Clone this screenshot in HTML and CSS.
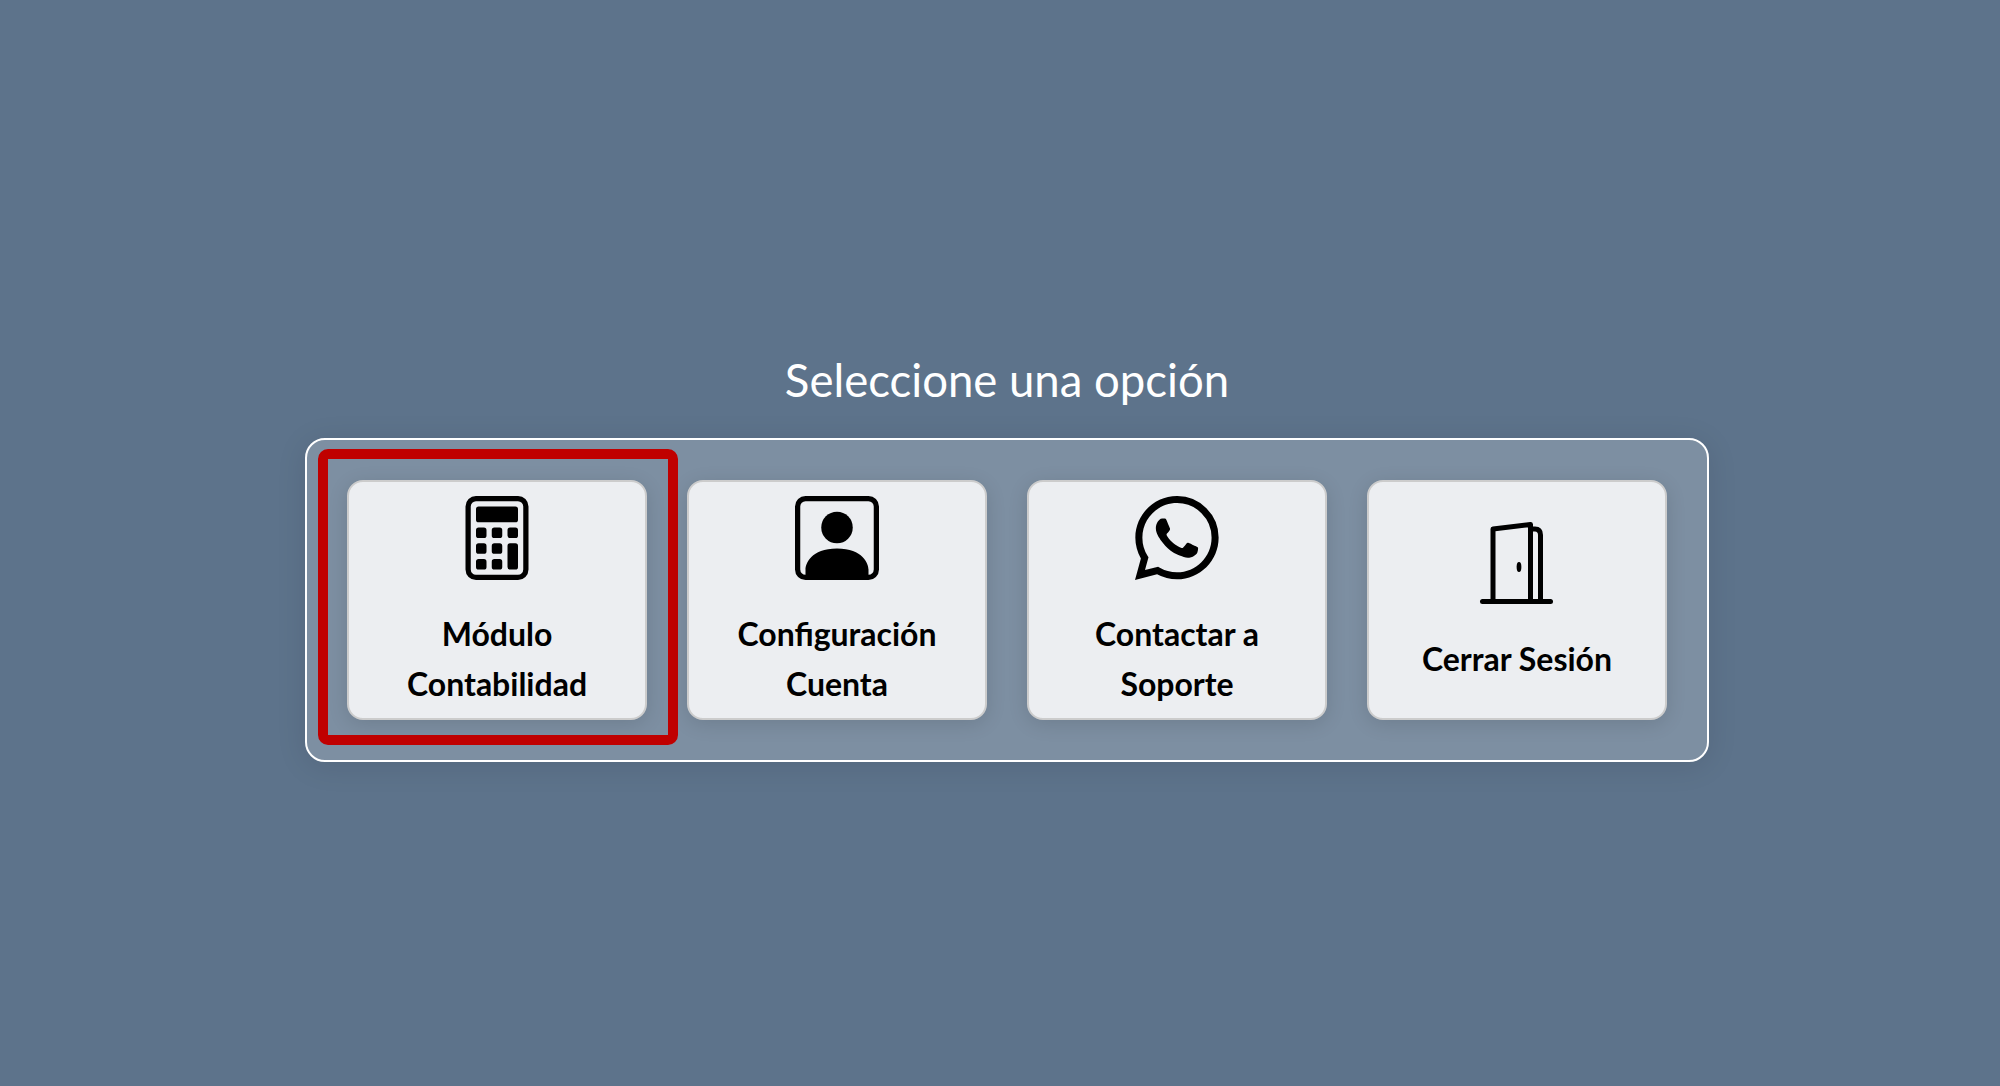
FILE: index.html
```html
<!DOCTYPE html>
<html lang="es">
<head>
<meta charset="utf-8">
<title>Seleccione una opción</title>
<link rel="stylesheet" href="styles.css">
</head>
<body>
<main class="page">
  <h1 class="title">Seleccione una opción</h1>
  <section class="panel">
    <a class="card">
      <svg class="icon" viewBox="0 0 16 16" fill="currentColor"><path d="M12 1a1 1 0 0 1 1 1v12a1 1 0 0 1-1 1H4a1 1 0 0 1-1-1V2a1 1 0 0 1 1-1h8zM4 0a2 2 0 0 0-2 2v12a2 2 0 0 0 2 2h8a2 2 0 0 0 2-2V2a2 2 0 0 0-2-2H4z"/><path d="M4 2.5a.5.5 0 0 1 .5-.5h7a.5.5 0 0 1 .5.5v2a.5.5 0 0 1-.5.5h-7a.5.5 0 0 1-.5-.5v-2zm0 4a.5.5 0 0 1 .5-.5h1a.5.5 0 0 1 .5.5v1a.5.5 0 0 1-.5.5h-1a.5.5 0 0 1-.5-.5v-1zm0 3a.5.5 0 0 1 .5-.5h1a.5.5 0 0 1 .5.5v1a.5.5 0 0 1-.5.5h-1a.5.5 0 0 1-.5-.5v-1zm0 3a.5.5 0 0 1 .5-.5h1a.5.5 0 0 1 .5.5v1a.5.5 0 0 1-.5.5h-1a.5.5 0 0 1-.5-.5v-1zm3-6a.5.5 0 0 1 .5-.5h1a.5.5 0 0 1 .5.5v1a.5.5 0 0 1-.5.5h-1a.5.5 0 0 1-.5-.5v-1zm0 3a.5.5 0 0 1 .5-.5h1a.5.5 0 0 1 .5.5v1a.5.5 0 0 1-.5.5h-1a.5.5 0 0 1-.5-.5v-1zm0 3a.5.5 0 0 1 .5-.5h1a.5.5 0 0 1 .5.5v1a.5.5 0 0 1-.5.5h-1a.5.5 0 0 1-.5-.5v-1zm3-6a.5.5 0 0 1 .5-.5h1a.5.5 0 0 1 .5.5v1a.5.5 0 0 1-.5.5h-1a.5.5 0 0 1-.5-.5v-1zm0 3a.5.5 0 0 1 .5-.5h1a.5.5 0 0 1 .5.5v4a.5.5 0 0 1-.5.5h-1a.5.5 0 0 1-.5-.5v-4z"/></svg>
      <span class="label">Módulo Contabilidad</span>
      <span class="highlight"></span>
    </a>
    <a class="card">
      <svg class="icon" viewBox="0 0 16 16" fill="currentColor"><path d="M11 6a3 3 0 1 1-6 0 3 3 0 0 1 6 0z"/><path d="M2 0a2 2 0 0 0-2 2v12a2 2 0 0 0 2 2h12a2 2 0 0 0 2-2V2a2 2 0 0 0-2-2H2zm12 1a1 1 0 0 1 1 1v12a1 1 0 0 1-1 1v-1c0-1-1-4-6-4s-6 3-6 4v1a1 1 0 0 1-1-1V2a1 1 0 0 1 1-1h12z"/></svg>
      <span class="label">Configuración Cuenta</span>
    </a>
    <a class="card">
      <svg class="icon" viewBox="0 0 16 16" fill="currentColor"><path d="M13.601 2.326A7.854 7.854 0 0 0 7.994 0C3.627 0 .068 3.558.064 7.926c0 1.399.366 2.76 1.057 3.965L0 16l4.204-1.102a7.933 7.933 0 0 0 3.79.965h.004c4.368 0 7.926-3.558 7.93-7.93A7.898 7.898 0 0 0 13.6 2.326zM7.994 14.521a6.573 6.573 0 0 1-3.356-.92l-.24-.144-2.494.654.666-2.433-.156-.251a6.56 6.56 0 0 1-1.007-3.505c0-3.626 2.957-6.584 6.591-6.584a6.56 6.56 0 0 1 4.66 1.931 6.557 6.557 0 0 1 1.928 4.66c-.004 3.639-2.961 6.592-6.592 6.592zm3.615-4.934c-.197-.099-1.17-.578-1.353-.646-.182-.065-.315-.099-.445.099-.133.197-.513.646-.627.775-.114.133-.232.148-.43.05-.197-.1-.836-.308-1.592-.985-.59-.525-.985-1.175-1.103-1.372-.114-.198-.011-.304.088-.403.087-.088.197-.232.296-.346.1-.114.133-.198.198-.33.065-.134.034-.248-.015-.347-.05-.099-.445-1.076-.612-1.47-.16-.389-.323-.335-.445-.34-.114-.007-.247-.007-.38-.007a.729.729 0 0 0-.529.247c-.182.198-.691.677-.691 1.654 0 .977.71 1.916.81 2.049.098.133 1.394 2.132 3.383 2.992.47.205.84.326 1.129.418.475.152.904.129 1.246.08.38-.058 1.171-.48 1.338-.943.164-.464.164-.86.114-.943-.049-.084-.182-.133-.38-.232z"/></svg>
      <span class="label">Contactar a Soporte</span>
    </a>
    <a class="card">
      <svg class="icon" viewBox="0 0 84 84" fill="none" stroke="currentColor" stroke-width="5" stroke-linecap="round" stroke-linejoin="round"><path d="M7.5 80.5H75.5"/><path d="M18 80.5V8L55.5 3.5V80.5"/><path d="M56 8H60Q65.5 8 65.5 14V80.5"/><ellipse cx="44" cy="46" rx="2.4" ry="5" fill="currentColor" stroke="none"/></svg>
      <span class="label">Cerrar Sesión</span>
    </a>
  </section>
</main>
</body>
</html>
```

FILE: styles.css
```css
* {
  box-sizing: border-box;
}

html,
body {
  margin: 0;
  height: 100%;
}

body {
  background: #5d738b;
  font-family: "Lato", "Open Sans", sans-serif;
  overflow: hidden;
}

.page {
  min-height: 1086px;
  padding: 354px 0 0 14px;
  display: flex;
  flex-direction: column;
  align-items: center;
}

.title {
  margin: 0 0 32px;
  color: #fff;
  font-size: 45.5px;
  font-weight: 400;
  line-height: 52px;
}

.panel {
  display: flex;
  gap: 40px;
  padding: 40px;
  border: 2px solid #fff;
  border-radius: 20px;
  background: rgba(255, 255, 255, 0.2);
  box-shadow: 0 4px 30px rgba(0, 0, 0, 0.1);
}

.card {
  position: relative;
  width: 300px;
  height: 240px;
  padding: 5px 20px 0;
  display: flex;
  flex-direction: column;
  align-items: center;
  justify-content: center;
  gap: 29px;
  border: 2px solid #ccc;
  border-radius: 16px;
  background: #eceef1;
  box-shadow: 0 4px 20px rgba(0, 0, 0, 0.12);
  color: #000;
  text-align: center;
}

.icon {
  display: block;
  width: 84px;
  height: 84px;
  flex: none;
}

.label {
  font-size: 32px;
  font-weight: 700;
  line-height: 50px;
}

.highlight {
  position: absolute;
  top: -33px;
  left: -31px;
  right: -33px;
  bottom: -27px;
  border: 10px solid #c00000;
  border-radius: 10px;
}
```
